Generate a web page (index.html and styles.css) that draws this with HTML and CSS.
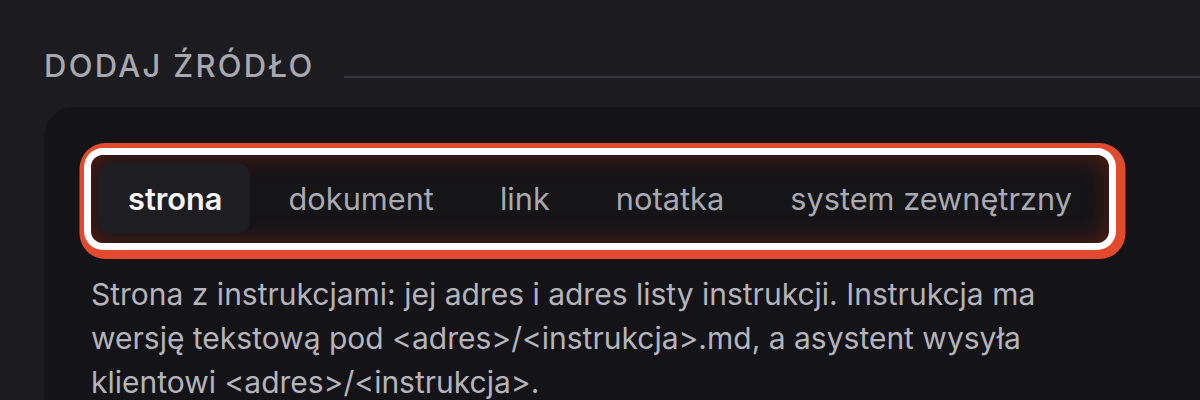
FILE: index.html
```html
<!DOCTYPE html>
<html lang="pl">
<head>
<meta charset="utf-8">
<link rel="stylesheet" href="styles.css">
</head>
<body>
<section class="section">
  <div class="section-head">
    <h2 class="section-title">Dodaj źródło</h2>
    <div class="section-rule"></div>
  </div>
  <div class="card">
    <div class="tabs" role="tablist">
      <button class="tab tab-active" role="tab">strona</button>
      <button class="tab" role="tab">dokument</button>
      <button class="tab" role="tab">link</button>
      <button class="tab" role="tab">notatka</button>
      <button class="tab" role="tab">system zewnętrzny</button>
    </div>
    <p class="desc">Strona z instrukcjami: jej adres i adres listy instrukcji. Instrukcja ma wersję tekstową pod &lt;adres&gt;/&lt;instrukcja&gt;.md, a asystent wysyła klientowi &lt;adres&gt;/&lt;instrukcja&gt;.</p>
  </div>
</section>
</body>
</html>
```
FILE: styles.css
```css
html, body {
  margin: 0;
  padding: 0;
  background: #1c1b20;
  font-family: Inter, "Noto Sans", sans-serif;
  overflow: hidden;
}
.section {
  padding: 48px 0 0 44px;
}
.section-head {
  display: flex;
  align-items: flex-end;
  gap: 29px;
  height: 36px;
}
.section-title {
  margin: 0;
  font-size: 31px;
  line-height: 36px;
  font-weight: 500;
  letter-spacing: 2.3px;
  text-transform: uppercase;
  color: #a8a8b0;
  white-space: nowrap;
}
.section-rule {
  flex: 1;
  height: 2px;
  background: #38373e;
  margin-bottom: 6px;
}
.card {
  margin-top: 23px;
  background: #141317;
  border-radius: 30px 0 0 0;
  padding: 48px 0 40px 47px;
}
.tabs {
  display: inline-flex;
  gap: 10px;
  padding: 8px 9px 10px 7px;
  background: #151417;
  border-radius: 12px;
  box-shadow:
    0 0 0 7px #ffffff,
    2.5px 2px 0 14px #e24a2e,
    inset 0 0 24px rgba(130, 36, 22, 0.65);
}
.tab {
  font-family: Inter, "Noto Sans", sans-serif;
  font-size: 30.75px;
  height: 70px;
  padding: 0 28px;
  border: 0;
  border-radius: 12px;
  background: transparent;
  color: #a9a9b1;
  cursor: pointer;
}
.tab-active {
  padding: 0 28px 0 30px;
  background: #1e1d22;
  color: #f5f5f7;
  font-weight: 600;
}
.desc {
  margin: 29px 0 0 0;
  max-width: 1010px;
  font-size: 30px;
  line-height: 44px;
  color: #b4b4bc;
}
```
